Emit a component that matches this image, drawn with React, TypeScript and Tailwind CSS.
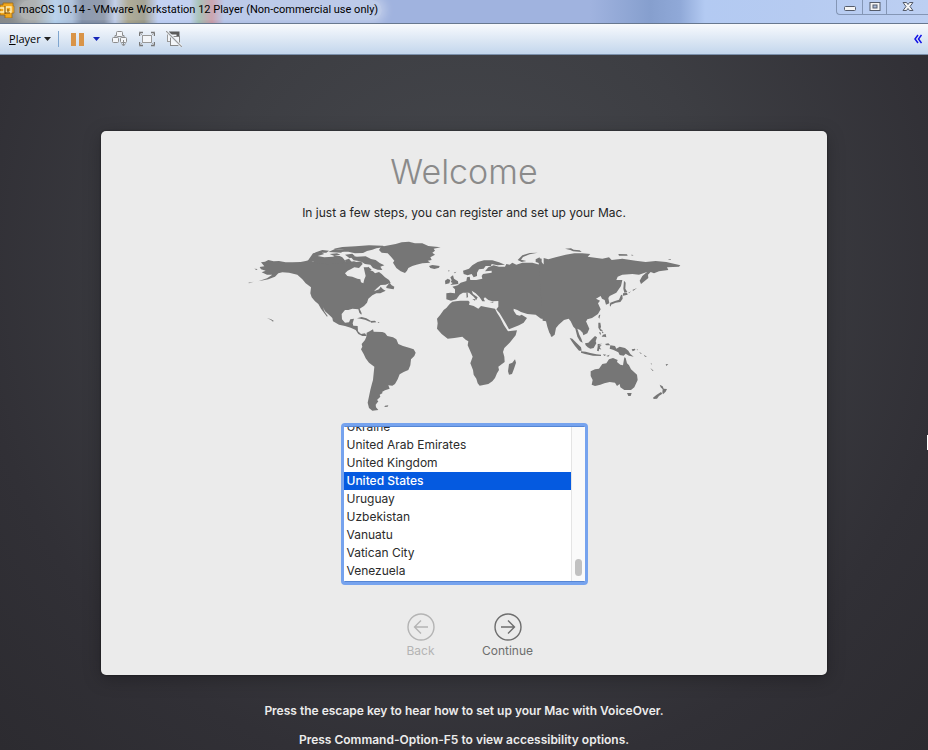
import { useLayoutEffect, useRef } from "react";

const COUNTRIES = [
  "Tunisia",
  "Turkey",
  "Turkmenistan",
  "Uganda",
  "Ukraine",
  "United Arab Emirates",
  "United Kingdom",
  "United States",
  "Uruguay",
  "Uzbekistan",
  "Vanuatu",
  "Vatican City",
  "Venezuela",
  "Vietnam",
  "Yemen",
  "Zambia",
];

const ROW_HEIGHT = 18;

function VmLogo() {
  return (
    <svg className="h-4 w-4 shrink-0" viewBox="0 0 16 16" aria-hidden="true">
      <path d="M0 3h3V1h10v3h1v7h-2v5H5v-3H0z" fill="#f2a71b" stroke="#9a6510" strokeWidth=".8" />
      <path d="M0 6h4v4H0M6 5h5v5H6z" fill="none" stroke="#fff0b8" strokeWidth="1.4" />
      <path d="M5 4v8M8 7v3M5 11h5" fill="none" stroke="#7b4c0c" strokeWidth="1" />
    </svg>
  );
}

function TitleBar() {
  return (
    <header className="flex h-6 items-start justify-between overflow-hidden border-b border-[#68788f] bg-[linear-gradient(90deg,#86898a_0px,#8e9292_35px,#9cc0e4_55px,#8fa9cc_72px,#5d708f_82px,#66748c_104px,#a9bbe0_115px,#8f8a6c_128px,#7d7c68_144px,#a9bfee_158px,#a9bdea_190px,#86aa9c_199px,#b67f90_212px,#9fb3e0_224px,#a0b3df_400px,#a0b3df_590px,#869fce_650px,#90a9d8_680px,#b3caf2_705px,#b6cbf1_800px,#bccff2_928px)]">
      <div className="flex items-center">
        <VmLogo />
        <h1 className="ml-[3px] rounded-full bg-white/30 pr-1 font-['Roboto',sans-serif] text-[11px] leading-5 font-normal whitespace-nowrap text-black shadow-[0_0_8px_4px_rgba(255,255,255,0.3)]">
          macOS 10.14 - VMware Workstation 12 Player (Non-commercial use only)
        </h1>
      </div>
      <div className="flex h-[15px] rounded-bl-[4px] border-b border-l border-[#8496b5]">
        <button type="button" aria-label="Minimize" className="flex w-[26px] items-center justify-center border-r border-[#8496b5]">
          <svg className="h-3 w-3" viewBox="0 0 12 12">
            <rect x=".5" y="5.500" width="11" height="4" rx="1" fill="#f5f5f5" stroke="#555c6b" />
          </svg>
        </button>
        <button type="button" aria-label="Maximize" className="flex w-6 items-center justify-center border-r border-[#8496b5]">
          <svg className="h-3 w-3" viewBox="0 0 12 12">
            <rect x="1" y="1.500" width="10" height="8" fill="#f5f5f5" stroke="#555c6b" />
            <rect x="4" y="4" width="4" height="3" fill="#a9bbdc" stroke="#555c6b" />
          </svg>
        </button>
        <button type="button" aria-label="Close" className="flex w-[41px] items-center justify-center">
          <svg className="h-3 w-3" viewBox="0 0 12 12">
            <path d="M1 1.500h3.500L6 3.500 7.500 1.500H11L8 5.500l3 4H7.500L6 7.500l-1.500 2H1l3-4z" fill="#f5f5f5" stroke="#555c6b" />
          </svg>
        </button>
      </div>
    </header>
  );
}

function Toolbar() {
  return (
    <nav className="flex h-[31px] items-center border-b border-[#7b90ab] bg-gradient-to-b from-[#f8fafd] to-[#c3d6ec] font-['Open_Sans','Noto_Sans',sans-serif] text-[11px] text-black">
      <button type="button" className="ml-[9px] flex items-center">
        <span className="w-[35px] text-left"><u>P</u>layer</span>
        <svg className="h-1 w-[7px]" viewBox="0 0 7 4"><path d="M0 0h7L3.500 4z" fill="#222" /></svg>
      </button>
      <span className="ml-[7px] h-4 w-px bg-[#7fa6d0]" />
      <button type="button" aria-label="Pause" className="ml-3 flex gap-[3px]">
        <span className="h-[13px] w-[5px] bg-[#d99448]" />
        <span className="h-[13px] w-[5px] bg-[#d99448]" />
      </button>
      <button type="button" aria-label="Power options" className="ml-[9px]">
        <svg className="h-1 w-[7px]" viewBox="0 0 7 4"><path d="M0 0h7L3.500 4z" fill="#1525b8" /></svg>
      </button>
      <button type="button" aria-label="Send Ctrl+Alt+Del" className="ml-3">
        <svg className="h-4 w-4" viewBox="0 0 16 16" fill="#f4f6f9" stroke="#8c8c8c">
          <rect x="4.500" y=".5" width="6" height="5" rx="1" />
          <rect x=".5" y="6.500" width="6" height="5" rx="1" />
          <rect x="8.500" y="6.500" width="6" height="5" rx="1" />
          <path d="M3 6V4.500h1M11 4.500h1V6M11.500 9v5M9.500 12.500l2 2.500 2-2.500" fill="none" />
        </svg>
      </button>
      <button type="button" aria-label="Full screen" className="ml-[11px]">
        <svg className="h-4 w-4" viewBox="0 0 16 16" fill="none" stroke="#777" strokeWidth="1">
          <rect x="3.500" y="4.500" width="9" height="7" fill="#f4f6f9" stroke="#999" />
          <path d="M.5 5V1.500H4M12 1.500h3.500V5M.5 11v3.500H4M12 14.500h3.500V11" strokeWidth="1.400" />
          <path d="M.5 1.500l3 3M15.500 1.500l-3 3M.5 14.500l3-3M15.500 14.500l-3-3" stroke="#aaa" />
        </svg>
      </button>
      <button type="button" aria-label="Unity mode" className="ml-[11px]">
        <svg className="h-4 w-4" viewBox="0 0 16 16" fill="none" stroke="#666">
          <rect x="1.500" y="1.500" width="10" height="9" fill="#f4f6f9" stroke="#999" />
          <path d="M3 2h9v3" strokeWidth="3" stroke="#5c5c5c" />
          <rect x="4.500" y="5.500" width="9" height="9" fill="#f4f6f9" stroke="#888" />
          <path d="M0 0l16 16" stroke="#eef3f9" strokeWidth="3" />
          <path d="M0 0l16 16" stroke="#999" strokeWidth="1.200" />
        </svg>
      </button>
      <button type="button" aria-label="Collapse toolbar" className="mr-1.5 ml-auto">
        <svg className="h-2.5 w-2" viewBox="0 0 8 10" fill="none" stroke="#1212e6" strokeWidth="1.500">
          <path d="M4 1L1 5l3 4M7.500 1l-3 4 3 4" />
        </svg>
      </button>
    </nav>
  );
}

function WorldMap() {
  return (
    <svg className="h-[190px] w-[450px] max-w-full" viewBox="0 0 1350 570" fill="#767676" role="img" aria-label="World map">
      {/* the Americas */}
      <path d="M66 97L78 95 88 90 104 94 120 93 140 97 160 97 185 96 200 93 212 90 222 95 240 96 250 91 262 95 282 92 296 97 312 92 330 96 345 94 352 96 366 94 371 102 360 114 346 112 335 118 326 122 318 130 325 138 340 140 355 146 364 148 366 157 373 160 376 148 380 138 377 125 374 112 385 112 390 120 402 124 408 130 420 126 428 132 438 142 450 150 455 158 440 164 425 165 412 176 405 184 420 178 425 170 432 178 440 182 424 190 412 190 400 196 388 206 384 218 375 228 362 236 368 250 367 254 361 248 358 238 340 236 328 240 318 240 308 252 309 268 318 278 330 277 334 268 345 266 341 280 343 287 356 288 357 304 366 312 378 310 383 318 370 318 358 312 350 300 335 293 318 288 300 284 282 274 280 264 274 258 258 244 252 232 256 244 266 258 264 260 256 250 246 236 238 222 228 214 218 202 214 190 216 172 200 160 190 148 175 134 150 128 130 127 118 130 108 140 88 148 58 154 84 145 100 134 84 134 68 127 80 122 66 118 62 111 76 109z" />
      <path d="M442 170l10-12 6 8 8 4-2 8-10-2-12-2zM28 158l16-3-14 5zM46 116l10 1-4 3zM84 264l12 4 8 4-2 3-6-5z" />
      <path d="M212 84l10-14 22-4 12 6-20 6 20 4 26-2 12-6 16 8 10 12-12 8-20-2-16 4-26-5-12 3-10-7-18-2zM226 68l24-8 20 2-8 6zM268 66l20-9 32 3-14 8zM272 72l22-2 10 4-18 4zM318 74l22-3 8 8-16 6zM318 90l12-4 10 12-16 3z" />
      <path d="M284 56L310 51 350 49 390 46 432 47 436 51 412 55 400 59 384 63 372 69 348 70 328 65 308 65 316 60z" />
      <path d="M330 76l24 4 26-1 16 8 14 3 12 9 14 7-12 4 6 10-14-1-14-5-8-10-16-2-14-8-20-3zM380 116l8-6 10 9-10 6z" />
      <path d="M354 265l14-4 14 4 14 8-4 2-14-6-14-3zM394 273l14-1 4 5-16 1zM416 276l6 1-4 2zM438 527l10-1-2 4-10 1z" />
      <path d="M383 308L392 304 402 298 404 305 430 306 438 309 445 318 462 322 472 328 478 342 492 348 510 353 524 358 530 368 526 378 516 388 514 406 508 420 494 426 482 433 476 448 468 462 460 467 448 466 452 476 438 481 430 485 430 490 422 494 424 500 414 510 418 514 410 524 411 532 418 540 400 542 390 534 386 518 394 480 398 464 402 450 406 410 390 398 380 385 374 372 366 358 370 350 368 342 378 330 382 320z" />
      {/* Greenland, Europe, Africa and western Asia */}
      <g transform="translate(450 0)">
        <path d="M-24 50L0 46 20 42 38 37 60 35 78 40 100 40 118 48 155 52 134 56 138 62 130 68 138 74 124 82 128 90 116 92 124 98 100 100 82 104 70 108 58 114 54 122 48 129 35 124 22 114 12 98 16 92 6 80-4 70-22 68-30 60zM120 108l10-3 22 3-2 5-14 4-12-3z" />
        <path d="M222 122L240 116 250 106 266 96 285 91 310 91 330 97 348 104 325 106 308 102 306 108 290 108 284 116 270 118 264 128 264 138 254 142 248 132 236 136 224 132z" />
        <path d="M184 142l8-6 3 10 12 8 1 8-24 3 7-6-6-3 3-5zM168 152l8-6 8 4-3 10-12 3zM178 120l4 2-3 3zM194 128l8-3-4 5z" />
        <path d="M172 190L184 188 198 190 198 178 190 170 206 166 215 158 232 153 234 142 242 140 244 150 262 150 280 146 278 138 282 132 308 128 308 122 288 124 298 112 314 106 330 110 348 110 352 102 362 104 370 98 382 104 400 98 430 98 452 104 480 102V266H456L448 260 440 254 415 252 396 246 385 240 374 236 374 242 382 254 392 257 398 254 414 264 404 278 390 286 360 298 350 280 332 250 322 238 328 230 328 213 310 214 298 210 288 202 284 206 288 214 280 214 272 202 260 190 248 182 252 192 266 202 262 210 254 200 240 188 222 188 212 194 202 208 186 212 172 208z" />
        <path d="M232 188l4 1 1 12-4 3zM250 208l10-1-2 5zM302 216l12-1-2 3zM386 90l14-14 22-7 24-1-24 5-20 8-6 8 16 4-14 3zM440 88l12-6v18l-12-4z" />
        <path d="M182 222L190 215 200 214 214 212 238 212 242 216 240 224 254 228 268 236 276 228 290 231 318 236 324 248 334 264 345 286 357 304 384 301 380 316 362 338 346 354 342 366 346 380 347 396 328 410 330 420 324 430 318 444 310 454 298 462 272 467 266 460 262 446 254 434 252 420 244 400 251 380 246 368 236 346 238 334 230 329 220 320 196 324 176 326 158 312 144 296 146 280 144 266 154 254 164 240 172 234z" />
        <path d="M378 388l3 10-6 18-6 16-9 2-3-10 3-22 10-4z" />
      </g>
      {/* eastern Asia and Oceania */}
      <g transform="translate(900 0)">
        <path d="M-2 84l10 2 0 10 6 8 0-20 14 4 22-6 30-8 26-4 24 0 24 2-8 8 44 6 20-4 8 8 32-4 40 6 30 4 30-3 32 3 42 10-4 4-36 2 4 8-28 4-15 6-10-4-8 8 1 10-10 8-12 10-4-10 8-14 14-12-24 8-20-2-30 2-14 6-4 10 18 0-4 18-14 20-20 10-4 6 3 16-10 4-4-14-8-4-4-8-14 8 12 6-6 8 8 18-8 14-18 12-14 4-4 6 10 22-6 14-12 6-2-8-8-8-8-4 6 18 6 12 4 12-8-4-8-14-6-24-6-6-8-16-6-8-14 4-16 14-8 10-4 20-8 6-8-12-6-18-4-16-10-2z" />
        <path d="M78 56l18-1 8 4 18 2 6 5-26-2-8-4zM238 72l26 1 2 4-26 0zM276 74l8 1-5 2zM386 88l10-1-2 3z" />
        <path d="M255 152l5 6-1 18 6 10-9 2-3-12zM252 190l12-2 2 6-14 3zM250 194l1 12-7 10-14 2-14 6 0 6-4-4 2-8 14-5 12-4 6-14zM268 188l8-4-6 6zM280 180l14-6-11 8zM36 310l5 2-2 9-4-3zM136 267l8 1-4 8-6-2zM180 255l4-1-3 12-3-4z" />
        <path d="M92 324l8 2 12 12 14 14 2 10-8 0-12-14-10-14zM126 364l14 1 14 4 18 4 14 1 0 4-24-1-24-5-12-4zM192 373l10 1-6 4zM202 378l10-4-4 6z" />
        <path d="M138 340l10-2 10-10 10-10 6 4-4 12 2 6-8 14-10 2-8-4-6-6zM176 342l14-1-12 5 10 0-6 5 5 8-6-3-2 8-5-2 2-12zM178 278l6 0 2 12-2 6 8 6-8 1-6-10zM180 306l6 2-2 8zM188 302l6 6-4 2zM192 314l8-2 2 10-6-2-8 0zM198 342l10-2 6 6-12 0z" />
        <path d="M214 346l14 2 4 8 10-6 16 4 10 8 6 10 10 8-14-3-10-6-6 6-12-2-4-8-16-8-10-3zM278 358l10-2 1 4-8 4zM292 356l6 4-2 1zM300 366l8 4-2 2zM314 374l10 6-6 0zM335 398l3 3-1 4zM334 414l10 8-4 0zM380 403l8-1-6 6z" />
        <path d="M155 424L168 418 180 416 190 402 202 400 210 388 222 384 236 390 234 396 244 404 252 406 256 382 260 384 264 400 270 406 276 418 294 434 296 450 286 472 276 480 256 480 244 472 242 462 234 468 228 458 212 456 196 460 184 464 168 468 158 464 161 450 155 438zM264 489l14 0-3 9-7 0z" />
        <path d="M362 464l9 5 3 7 10 1-4 8-8 8-2-6 1-9-6-6zM366 486l4 5-10 7-6 8-10 1-2-4 10-8z" />
      </g>
    </svg>
  );
}

function CountryList() {
  const listRef = useRef<HTMLSelectElement>(null);

  useLayoutEffect(() => {
    const list = listRef.current;
    if (!list) return;
    const scroll = () => {
      list.scrollTop = 4 * ROW_HEIGHT + 9;
    };
    scroll();
    const frame = requestAnimationFrame(() => requestAnimationFrame(scroll));
    return () => cancelAnimationFrame(frame);
  }, []);

  return (
    <div className="flex h-[162px] w-[247px] overflow-hidden rounded-[4px] border-[3px] border-[#76a3ee] bg-white">
      <label htmlFor="country" className="sr-only">Country or region</label>
      <div className="flex min-w-0 flex-1 border-y border-t-[#5686d4] border-b-[#5686d4]">
        <select
          id="country"
          ref={listRef}
          size={9}
          defaultValue="United States"
          className="h-full min-w-0 flex-1 appearance-none overflow-y-scroll bg-none p-0 text-[12px] text-[#2b2b2b] outline-none [scrollbar-width:none]"
        >
          {COUNTRIES.map((name) => (
            <option
              key={name}
              value={name}
              className="h-[18px] min-h-0 px-[3px] pt-px pb-0 leading-[17px] checked:bg-[linear-gradient(#055ae0,#055ae0)] checked:font-medium checked:[-webkit-text-fill-color:white]"
            >
              {name}
            </option>
          ))}
        </select>
        <div className="flex w-[14px] items-end justify-center border-l border-[#e4e4e4] bg-[#fafafa] pb-[5px]">
          <div className="h-[17px] w-[7px] rounded-full bg-[#c1c1c1]" />
        </div>
      </div>
    </div>
  );
}

function StepButton({ label, disabled }: { label: string; disabled?: boolean }) {
  return (
    <button
      type="button"
      disabled={disabled}
      className="flex w-[87px] flex-col items-center gap-0.5 text-[12px] leading-4 text-[#6e6e6e] disabled:text-[#b4b4b4]"
    >
      <svg className="h-7 w-7" viewBox="0 0 28 28" fill="none" stroke="currentColor" strokeWidth="1.400" aria-hidden="true">
        <circle cx="14" cy="14" r="13" />
        {disabled ? <path d="M21 14H8M14 7.500L7.500 14l6.500 6.500" /> : <path d="M7 14h13M14 7.500l6.500 6.500-6.500 6.500" />}
      </svg>
      {label}
    </button>
  );
}

export default function App() {
  return (
    <div className="relative flex min-h-screen flex-col overflow-hidden bg-[#2d2c31] font-['Inter','Liberation_Sans',sans-serif]">
      <TitleBar />
      <Toolbar />
      <main className="flex flex-1 flex-col items-center bg-[radial-gradient(ellipse_at_50%_30%,#46484d_0%,#3d3e43_40%,#313036_75%,#2c2b30_100%)] pt-[76px]">
        <section className="flex w-full max-w-[726px] flex-col items-center rounded-[5px] bg-[#ebebeb] pt-5 pb-4 shadow-[0_0_2px_rgba(0,0,0,0.6),0_4px_18px_rgba(0,0,0,0.25)]">
          <h2 className="text-[34px] leading-[42px] font-light text-[#8a8a8a]">Welcome</h2>
          <p className="mt-3 text-[12px] leading-4 text-[#262626]">In just a few steps, you can register and set up your Mac.</p>
          <div className="mt-[9px] flex w-full justify-center">
            <WorldMap />
          </div>
          <div className="mt-[3px]">
            <CountryList />
          </div>
          <div className="mt-7 flex">
            <StepButton label="Back" disabled />
            <StepButton label="Continue" />
          </div>
        </section>
        <footer className="flex flex-col items-center gap-[13px] pt-7 pb-[2px] text-[12px] leading-4 font-semibold text-[#ececec]">
          <p>Press the escape key to hear how to set up your Mac with VoiceOver.</p>
          <p>Press Command-Option-F5 to view accessibility options.</p>
        </footer>
      </main>
      <span className="absolute top-[435px] right-0 h-[15px] w-px bg-white" />
    </div>
  );
}
